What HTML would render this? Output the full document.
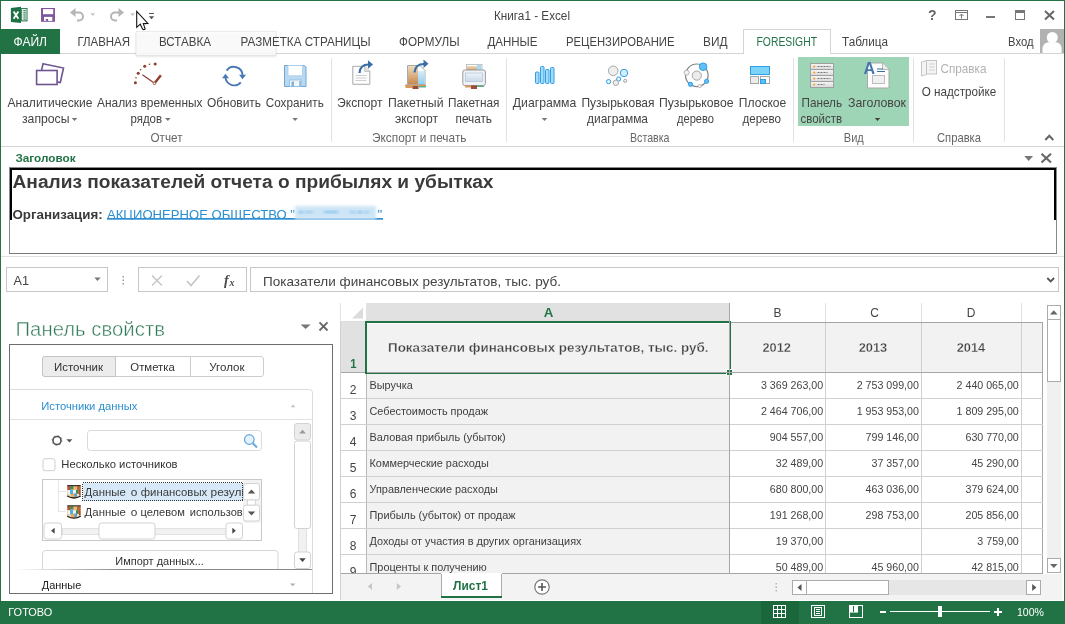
<!DOCTYPE html>
<html><head><meta charset="utf-8">
<style>
*{margin:0;padding:0}
html,body{width:1065px;height:624px;overflow:hidden;background:#fff}
svg{position:absolute;left:0;top:0;display:block;opacity:.999}
text{font-family:"Liberation Sans",sans-serif;font-size:12px;fill:#444;white-space:pre}
.t{font-size:12.5px}
#rlabels text{font-size:12.4px}
#trt text{font-size:11.6px;fill:#3a3a3a}
.g{fill:#666}
.b{font-weight:bold}
.c{shape-rendering:crispEdges}
.m{text-anchor:middle}
.e{text-anchor:end}
.n{font-size:10.67px;fill:#444}
.p{font-size:11px;fill:#333}
</style></head><body>
<svg width="1065" height="624" viewBox="0 0 1065 624">
<defs>
<linearGradient id="gOr" x1="0" y1="0" x2="0" y2="1"><stop offset="0" stop-color="#ecdcbc"/><stop offset="1" stop-color="#c98a52"/></linearGradient>
<linearGradient id="gBl" x1="0" y1="0" x2="0" y2="1"><stop offset="0" stop-color="#d6ecfa"/><stop offset="1" stop-color="#8fd0f2"/></linearGradient>
<linearGradient id="gGr" x1="0" y1="0" x2="0" y2="1"><stop offset="0" stop-color="#f6f6f6"/><stop offset="1" stop-color="#d9d9d9"/></linearGradient>
<linearGradient id="gPr" x1="0" y1="0" x2="0" y2="1"><stop offset="0" stop-color="#eef3f8"/><stop offset="1" stop-color="#c9d9ea"/></linearGradient>
<filter id="sh" x="-10%" y="-10%" width="120%" height="140%"><feGaussianBlur stdDeviation="1.2"/></filter>
<filter id="bl" x="-5%" y="-20%" width="110%" height="140%"><feGaussianBlur stdDeviation="1.5"/></filter>
</defs>
<rect width="1065" height="624" fill="#fff"/>

<!-- ===== TITLE BAR ===== -->
<g id="titlebar">
<text class="t" x="494" y="20" textLength="76" lengthAdjust="spacingAndGlyphs">Книга1 - Excel</text>
<!-- excel logo -->
<g id="xl">
<rect x="21" y="8.600" width="6" height="12.300" fill="#fff" stroke="#1e7145" stroke-width="1"/>
<g fill="#1e7145"><rect x="23.300" y="10.200" width="2.500" height="1.100"/><rect x="23.300" y="12.300" width="2.500" height="1.100"/><rect x="23.300" y="14.400" width="2.500" height="1.100"/><rect x="23.300" y="16.500" width="2.500" height="1.100"/><rect x="23.300" y="18.600" width="2.500" height="1.100"/>
<rect x="21" y="10.200" width="1.300" height="1.100"/><rect x="21" y="12.300" width="1.300" height="1.100"/><rect x="21" y="14.400" width="1.300" height="1.100"/><rect x="21" y="16.500" width="1.300" height="1.100"/><rect x="21" y="18.600" width="1.300" height="1.100"/></g>
<path d="M10.900 8 L21 6.800 L21 23.100 L10.900 22 Z" fill="#1e7145"/>
<path d="M13.600 11.400 L18.400 18.800 M18.400 11.400 L13.600 18.800" stroke="#fff" stroke-width="1.800" fill="none"/>
</g>
<!-- save (purple) -->
<g id="qsave">
<rect x="41" y="8" width="14" height="13.800" fill="#80579f"/>
<rect x="43" y="9.100" width="10.200" height="5.100" fill="#fff"/>
<rect x="44" y="16.900" width="8.300" height="4" fill="#fff"/>
<rect x="45.800" y="18.900" width="2.300" height="2" fill="#80579f"/>
</g>
<!-- undo -->
<g fill="none" stroke="#b5b5b5" stroke-width="2">
<path d="M73.5 12.5 H79 a4 4 0 0 1 0 8 H77"/>
<path d="M110 20.500 H112 a4 4 0 0 0 0 -8 H120" transform="translate(0,0)" visibility="hidden"/>
</g>
<path d="M70 12.500 L75.500 8 V17 Z" fill="#b5b5b5"/>
<path d="M90.400 13.300 h4.800 l-2.400 2.700 z" fill="#c4c4c4"/>
<!-- redo -->
<path d="M120.500 12.500 H115 a4 4 0 0 0 0 8 H117" fill="none" stroke="#b5b5b5" stroke-width="2"/>
<path d="M124 12.500 L118.500 8 V17 Z" fill="#b5b5b5"/>
<path d="M130.200 13.300 h4.800 l-2.400 2.700 z" fill="#c4c4c4"/>
<!-- customize -->
<rect class="c" x="149" y="13" width="5" height="1" fill="#555"/>
<path d="M148.800 16.300 h5.400 l-2.700 3 z" fill="#555"/>
<!-- window controls -->
<text x="928" y="20" class="b" style="font-size:14px;fill:#666">?</text>
<g class="c" fill="none" stroke="#777">
<rect x="955.500" y="10.500" width="12" height="9"/>
<path d="M955 12.500h13"/>
</g>
<path d="M961.500 18.500v-4M959.500 16l2-2 2 2" fill="none" stroke="#777" stroke-width="1"/>
<rect class="c" x="986" y="16" width="9" height="2" fill="#777"/>
<rect class="c" x="1015.500" y="11.500" width="9" height="8" fill="none" stroke="#777"/>
<rect class="c" x="1015" y="10" width="10" height="3" fill="#777"/>
<path d="M1045 11 L1054 19.500 M1054 11 L1045 19.500" stroke="#666" stroke-width="2" fill="none"/>
</g>

<!-- ===== TABS ===== -->
<g id="tabs">
<rect class="c" x="1" y="53" width="1063" height="1" fill="#d4d4d4"/>
<rect class="c" x="1" y="29" width="59" height="25" fill="#217346"/>
<text class="t" x="13.500" y="46" textLength="33.500" lengthAdjust="spacingAndGlyphs" style="fill:#fff">ФАЙЛ</text>
<text class="t" x="77.500" y="46" textLength="52.500" lengthAdjust="spacingAndGlyphs">ГЛАВНАЯ</text>
<!-- hover popup under cursor -->
<rect x="136" y="33" width="140" height="23.500" fill="#000" opacity=".13" filter="url(#sh)"/>
<rect x="136" y="31.300" width="140" height="24.200" fill="#fdfdfd" opacity=".88" stroke="#e2e2e2" stroke-width=".8"/>
<text class="t" x="159" y="46" textLength="52" lengthAdjust="spacingAndGlyphs">ВСТАВКА</text>
<text class="t" x="240.500" y="46" textLength="130" lengthAdjust="spacingAndGlyphs">РАЗМЕТКА СТРАНИЦЫ</text>
<text class="t" x="399" y="46" textLength="60.500" lengthAdjust="spacingAndGlyphs">ФОРМУЛЫ</text>
<text class="t" x="487.500" y="46" textLength="50" lengthAdjust="spacingAndGlyphs">ДАННЫЕ</text>
<text class="t" x="566" y="46" textLength="108.500" lengthAdjust="spacingAndGlyphs">РЕЦЕНЗИРОВАНИЕ</text>
<text class="t" x="703" y="46" textLength="24.500" lengthAdjust="spacingAndGlyphs">ВИД</text>
<rect class="c" x="743.500" y="29.500" width="87" height="24" fill="#fff" stroke="#d4d4d4"/>
<rect class="c" x="744" y="53" width="86" height="1" fill="#fff"/>
<text class="t" x="756.500" y="46" textLength="60.500" lengthAdjust="spacingAndGlyphs" style="fill:#217346">FORESIGHT</text>
<text class="t" x="842" y="46" textLength="46" lengthAdjust="spacingAndGlyphs">Таблица</text>
<text class="t" x="1008" y="46" textLength="25.500" lengthAdjust="spacingAndGlyphs">Вход</text>
<!-- avatar -->
<rect class="c" x="1040" y="29" width="24" height="24" fill="#b2b2b2"/>
<path d="M1042.500 53 v-4.500 q0 -4.500 5.500 -6.200 h8.600 q5 1.700 5 6.200 v4.500 z" fill="#fff"/>
<circle cx="1052.300" cy="37.500" r="5.500" fill="#fff"/>
<!-- cursor -->
<path d="M136.700 11.400 V27.300 L140.300 24.200 L142.500 28.900 Q143.800 30.400 145.100 28.900 L143.300 23.600 L147.900 23.400 Z" fill="#fff" stroke="#111" stroke-width="1.100" stroke-linejoin="miter"/>
</g>
<!-- ===== RIBBON ===== -->
<g id="ribbon">
<rect class="c" x="798" y="57" width="111" height="69" fill="#9fd5b7"/>
<g class="c" fill="#e2e2e2">
<rect x="331" y="58" width="1" height="84"/><rect x="506" y="58" width="1" height="84"/>
<rect x="793" y="58" width="1" height="84"/><rect x="913" y="58" width="1" height="84"/>
<rect x="1004" y="58" width="1" height="84"/>
</g>
<rect class="c" x="1" y="146" width="1063" height="1" fill="#d4d4d4"/>

<!-- icon: analytic queries -->
<g fill="#fff" stroke="#6f5590" stroke-width="1.600">
<path d="M43 63.800 L63.500 68 L60.300 82.500 L39.800 78.300 Z"/>
<rect x="36.600" y="70.500" width="20.500" height="14"/>
</g>
<!-- icon: time series -->
<g fill="#8f3c2c">
<circle cx="135.400" cy="82.800" r="1.500"/><circle cx="136" cy="77.800" r=".8"/><circle cx="138.200" cy="73.300" r="1.500"/>
<circle cx="140.600" cy="69.700" r=".8"/><circle cx="144.700" cy="66.300" r="1.500"/><circle cx="149.500" cy="64.300" r=".8"/>
<circle cx="155.200" cy="64" r="1.500"/>
</g>
<path d="M142.400 74.800 L154.500 83.200" stroke="#8f3c2c" stroke-width="1.200" fill="none"/>
<path d="M154.500 83.200 L160.900 75.300" stroke="#8f3c2c" stroke-width="2.400" fill="none"/>
<circle cx="154.500" cy="83.400" r="1.300" fill="#fff" stroke="#8f3c2c" stroke-width=".8"/>
<!-- icon: refresh -->
<g fill="none" stroke="#4a7ab5" stroke-width="1.900">
<path d="M226.600 70.600 A8.800 8.800 0 0 1 242.600 75.500"/>
<path d="M225.400 77 A8.800 8.800 0 0 0 240.800 82.300"/>
</g>
<path d="M222 78.300 L229 78.300 L225.500 73.800 Z" fill="#4a7ab5"/>
<path d="M239 74.800 L246 74.800 L242.500 79.300 Z" fill="#4a7ab5"/>
<!-- icon: save floppy -->
<g>
<path d="M284.500 65.500 h20 l1.500 1.500 v19.500 h-21.500 z" fill="#b9d9f1" stroke="#6ea6da" stroke-width="1"/>
<rect x="288" y="65.500" width="14.500" height="10.300" fill="#fff" stroke="#a9cdec" stroke-width=".8"/>
<rect x="289.600" y="80" width="11.600" height="6.500" fill="#f3f6f9" stroke="#8fbbe3" stroke-width=".8"/>
<rect x="291.500" y="81.500" width="2.500" height="5" fill="#7fb2e0"/>
<rect x="299.300" y="81" width="1.500" height="5.500" fill="#7fb2e0"/>
</g>
<!-- icon: export -->
<g>
<path d="M352.800 66.300 h12 l5 5 v13 h-17 z" fill="#fdfdfd" stroke="#a9a9a9" stroke-width="1"/>
<path d="M364.800 66.300 v5 h5" fill="#e8e8e8" stroke="#a9a9a9" stroke-width=".8"/>
<path d="M355.500 75.500h11M355.500 78h11M355.500 80.500h11" stroke="#cfcfcf" stroke-width="1"/>
<path d="M359.500 73 C360 67 364 64.500 368.500 64.500" fill="none" stroke="#3a6ea5" stroke-width="2.200"/>
<path d="M368 60.300 L373 64.500 L368 68.700 Z" fill="#3a6ea5"/>
</g>
<!-- icon: batch export -->
<g>
<rect x="405" y="84.500" width="21" height="1.500" fill="#d89a5a"/>
<rect x="405.500" y="86" width="7" height="2" fill="#d89a5a"/><rect x="412.500" y="86" width="6" height="3" fill="#9c4a3a"/><rect x="419" y="86" width="7" height="1.500" fill="#5fae8e"/>
<path d="M407.500 65.500 h12.500 l5 5 v14 h-17.500 z" fill="#fdfdfd" stroke="#a9a9a9" stroke-width="1"/>
<rect x="408" y="66" width="10" height="18" fill="url(#gOr)"/>
<rect x="418" y="71" width="6.500" height="13" fill="url(#gBl)"/>
<path d="M414.500 72.500 C415 66.500 419 64 424 64" fill="none" stroke="#3a6ea5" stroke-width="2.200"/>
<path d="M423.500 59.500 L428.500 63.800 L423.500 68.100 Z" fill="#3a6ea5"/>
</g>
<!-- icon: batch print -->
<g>
<rect x="466.500" y="64.500" width="15.500" height="9" fill="#fdfdfd" stroke="#b5b5b5" stroke-width=".8"/>
<rect x="467" y="66" width="10" height="6" fill="url(#gOr)"/><rect x="477" y="65" width="4.500" height="6" fill="#a9d9f3"/>
<rect x="462.800" y="70" width="22.600" height="15.500" rx="2" fill="#eef1f5" stroke="#9a9a9a" stroke-width="1"/>
<rect x="465.500" y="73" width="17" height="8.500" fill="url(#gPr)" stroke="#a8b8cc" stroke-width=".6"/>
<rect x="465" y="85.500" width="6" height="2" fill="#d89a5a"/><rect x="471" y="85.500" width="6" height="3.500" fill="#9c4a3a"/><rect x="477" y="85.500" width="7" height="1.500" fill="#5fae8e"/>
</g>
<!-- icon: chart -->
<g fill="#a4dbf8" stroke="#2e9fe6" stroke-width="1">
<rect x="535.500" y="72" width="3.500" height="11.500" rx="1"/><rect x="540.500" y="66.500" width="3.500" height="17" rx="1"/>
<rect x="545.500" y="69.500" width="3.500" height="14" rx="1"/><rect x="550.500" y="67.500" width="3.500" height="16" rx="1"/>
</g>
<!-- icon: bubble chart -->
<g stroke-width="1">
<circle cx="613.200" cy="70.800" r="4.800" fill="#eee" stroke="#a8a8a8"/>
<circle cx="624" cy="73" r="3.700" fill="#d5edfb" stroke="#2e9fe6"/>
<circle cx="608.600" cy="81.600" r="2.100" fill="#eaf6fd" stroke="#2e9fe6"/>
<circle cx="618.700" cy="79" r="2.100" fill="#eaf6fd" stroke="#2e9fe6"/>
<circle cx="615.900" cy="82.800" r="2.700" fill="#eee" stroke="#a8a8a8"/>
<circle cx="625.200" cy="80.800" r="1.600" fill="#eee" stroke="#a8a8a8"/>
</g>
<!-- icon: bubble tree -->
<g stroke-width="1">
<circle cx="696.800" cy="75.300" r="11.300" fill="none" stroke="#858585" stroke-width="1.200"/>
<circle cx="696.800" cy="75.600" r="4.600" fill="#ececec" stroke="#a5a5a5"/>
<circle cx="703.100" cy="66.700" r="3.800" fill="#62c0f4" stroke="#2e9fe6"/>
<circle cx="686.700" cy="72.700" r="2.500" fill="#f3f3f3" stroke="#b5b5b5"/>
<circle cx="706.600" cy="81.300" r="2.100" fill="#62c0f4" stroke="#2e9fe6"/>
<circle cx="690.500" cy="84.300" r="2.100" fill="#62c0f4" stroke="#2e9fe6"/>
<circle cx="699.800" cy="86.100" r="1.500" fill="#fff" stroke="#b5b5b5"/>
</g>
<!-- icon: flat tree -->
<g class="c" stroke-width="1">
<rect x="750.500" y="66.500" width="19" height="8" fill="#7dd3f7" stroke="#2e9fe6"/>
<rect x="750.500" y="76.500" width="8" height="7" fill="#ececec" stroke="#a5a5a5"/>
<rect x="760.500" y="76.500" width="9" height="7" fill="#fff" stroke="#a5a5a5"/>
<rect x="760.500" y="79.500" width="5" height="4" fill="#5cc0f3" stroke="#2e9fe6"/>
</g>
<!-- icon: properties panel -->
<g>
<g class="c" fill="url(#gGr)" stroke="#a0a0a0" stroke-width="1">
<rect x="810.500" y="63.500" width="23" height="6"/><rect x="810.500" y="69.500" width="23" height="6"/>
<rect x="810.500" y="75.500" width="23" height="6"/><rect x="810.500" y="81.500" width="23" height="6"/>
</g>
<g fill="#f0a030"><circle cx="814.200" cy="66.500" r="1.100"/><circle cx="814.200" cy="72.500" r="1.100"/><circle cx="814.200" cy="78.500" r="1.100"/><circle cx="814.200" cy="84.500" r="1.100"/></g>
<path d="M817.500 66.500h13M817.500 72.500h10M817.500 78.500h13M817.500 84.500h7" stroke="#777" stroke-width="1" stroke-dasharray="2 1"/>
</g>
<!-- icon: header -->
<g>
<path d="M867.500 63 h15 l6.500 6.500 v18.500 h-21.500 z" fill="#fdfdfd" stroke="#a9a9a9" stroke-width="1"/>
<path d="M882.500 63 v6.500 h6.500" fill="#eaeaea" stroke="#a9a9a9" stroke-width=".8"/>
<rect x="872.500" y="75.500" width="12" height="8" fill="#f0f0f0" stroke="#bdbdbd" stroke-width="1"/>
<path d="M877 69h6M877 71.500h8" stroke="#3a6ea5" stroke-width="1.200"/>
<text x="863.500" y="73.600" style="font-size:16px;font-weight:bold;fill:#4576ad">A</text>
</g>
<!-- icon: help book (disabled) -->
<g fill="#f4f4f4" stroke="#c4c4c4" stroke-width="1">
<path d="M921.500 62 l5 -1.500 v14 l-5 1.500 z"/>
<rect x="926.500" y="60.500" width="10" height="13.500"/>
<path d="M929 64h5.500M929 67h5.500M929 70h5.500" stroke="#d0d0d0"/>
</g>
<!-- ribbon labels -->
<g id="rlabels">
<text x="7.500" y="107" textLength="85" lengthAdjust="spacingAndGlyphs">Аналитические</text>
<text x="22" y="123" textLength="47.500" lengthAdjust="spacingAndGlyphs">запросы</text>
<path d="M71.700 118 h5.600 l-2.800 3 z" fill="#777"/>
<text x="97" y="107" textLength="105.500" lengthAdjust="spacingAndGlyphs">Анализ временных</text>
<text x="130.500" y="123" textLength="31.500" lengthAdjust="spacingAndGlyphs">рядов</text>
<path d="M165 118 h5.600 l-2.800 3 z" fill="#777"/>
<text x="207" y="107" textLength="54" lengthAdjust="spacingAndGlyphs">Обновить</text>
<text x="265.800" y="107" textLength="58" lengthAdjust="spacingAndGlyphs">Сохранить</text>
<path d="M292.300 118 h5.600 l-2.800 3 z" fill="#777"/>
<text x="337" y="107" textLength="45.500" lengthAdjust="spacingAndGlyphs">Экспорт</text>
<text x="388" y="107" textLength="55.500" lengthAdjust="spacingAndGlyphs">Пакетный</text>
<text x="395" y="123" textLength="43" lengthAdjust="spacingAndGlyphs">экспорт</text>
<text x="448" y="107" textLength="51.500" lengthAdjust="spacingAndGlyphs">Пакетная</text>
<text x="455.500" y="123" textLength="36.500" lengthAdjust="spacingAndGlyphs">печать</text>
<text x="512.800" y="107" textLength="63.500" lengthAdjust="spacingAndGlyphs">Диаграмма</text>
<path d="M541.700 118 h5.600 l-2.800 3 z" fill="#777"/>
<text x="581.500" y="107" textLength="73" lengthAdjust="spacingAndGlyphs">Пузырьковая</text>
<text x="587" y="123" textLength="61" lengthAdjust="spacingAndGlyphs">диаграмма</text>
<text x="659" y="107" textLength="74.500" lengthAdjust="spacingAndGlyphs">Пузырьковое</text>
<text x="677" y="123" textLength="37" lengthAdjust="spacingAndGlyphs">дерево</text>
<text x="738.800" y="107" textLength="47.500" lengthAdjust="spacingAndGlyphs">Плоское</text>
<text x="742.500" y="123" textLength="38.500" lengthAdjust="spacingAndGlyphs">дерево</text>
<text x="801.500" y="107" textLength="40.500" lengthAdjust="spacingAndGlyphs">Панель</text>
<text x="800.500" y="123" textLength="41.500" lengthAdjust="spacingAndGlyphs">свойств</text>
<text x="848" y="107" textLength="58" lengthAdjust="spacingAndGlyphs">Заголовок</text>
<path d="M874.700 118 h5.600 l-2.800 3 z" fill="#444"/>
<text x="940.500" y="73" textLength="46" lengthAdjust="spacingAndGlyphs" style="fill:#b2b2b2">Справка</text>
<text x="921.800" y="95.500" textLength="74.500" lengthAdjust="spacingAndGlyphs">О надстройке</text>
<text class="g" x="150.500" y="142" textLength="32" lengthAdjust="spacingAndGlyphs">Отчет</text>
<text class="g" x="372" y="142" textLength="94.500" lengthAdjust="spacingAndGlyphs">Экспорт и печать</text>
<text class="g" x="630" y="142" textLength="39.500" lengthAdjust="spacingAndGlyphs">Вставка</text>
<text class="g" x="843.800" y="142" textLength="20" lengthAdjust="spacingAndGlyphs">Вид</text>
<text class="g" x="937" y="142" textLength="44" lengthAdjust="spacingAndGlyphs">Справка</text>
<path d="M1045.300 140 l4 -4.200 l4 4.200" fill="none" stroke="#666" stroke-width="2"/>
</g>
</g>
<!-- ===== HEADER PANE ===== -->
<g id="hdr">
<text class="b" x="15.500" y="161.600" textLength="60" lengthAdjust="spacingAndGlyphs" style="font-size:11px;fill:#217346">Заголовок</text>
<path d="M1024.300 156 h8.800 l-4.400 5 z" fill="#777"/>
<path d="M1041.500 153.800 L1051 162.500 M1051 153.800 L1041.500 162.500" stroke="#666" stroke-width="2.100" fill="none"/>
<g class="c">
<rect x="9" y="167" width="1" height="87" fill="#8a8a8a"/>
<rect x="9" y="167" width="1048" height="1" fill="#8a8a8a"/>
<rect x="1056" y="167" width="1" height="87" fill="#8a8a8a"/>
<rect x="9" y="253" width="1048" height="1" fill="#7a7a7a"/>
<rect x="10" y="168" width="1046" height="2" fill="#000"/>
<rect x="10" y="168" width="2" height="52" fill="#000"/>
<rect x="1054" y="168" width="2" height="52" fill="#000"/>
<rect x="1" y="256" width="1063" height="1" fill="#e1e1e1"/>
</g>
<text class="b" x="12.500" y="188" textLength="481" lengthAdjust="spacingAndGlyphs" style="font-size:19.200px;fill:#3a3a3a">Анализ показателей отчета о прибылях и убытках</text>
<text class="b" x="12.500" y="218.600" style="font-size:13.330px;fill:#3a3a3a">Организация:</text>
<clipPath id="lk"><rect x="100" y="200" width="300" height="20"/></clipPath>
<g clip-path="url(#lk)">
<text x="107" y="218.800" textLength="188" lengthAdjust="spacingAndGlyphs" style="font-size:13.330px;fill:#2b8fd1">АКЦИОНЕРНОЕ ОБЩЕСТВО "</text>
<text x="377.500" y="218.800" style="font-size:13.330px;fill:#2b8fd1">"</text>
<rect x="107" y="218" width="276" height="1.700" fill="#2b8fd1"/>
<rect x="295" y="206" width="81" height="13.500" fill="#cde5f6" filter="url(#bl)"/>
<g fill="#7dbbe6" filter="url(#bl)"><rect x="299" y="211" width="4" height="2.500"/><rect x="305" y="211.500" width="8" height="1.500"/><rect x="324" y="211" width="14" height="2"/><rect x="350" y="211.500" width="6" height="1.500"/><rect x="358" y="211" width="4" height="2.500"/><rect x="364" y="211.500" width="5" height="1.500"/></g>
</g>
</g>

<!-- ===== FORMULA BAR ===== -->
<g id="fbar">
<g class="c" fill="#fff" stroke="#c6c6c6">
<rect x="6.500" y="267.500" width="101" height="24"/>
<rect x="138.500" y="267.500" width="108" height="24"/>
<rect x="250.500" y="267.500" width="808" height="24"/>
</g>
<text x="13.500" y="285" textLength="15.500" lengthAdjust="spacingAndGlyphs" style="font-size:13px">A1</text>
<path d="M94.300 277.500 h6.400 l-3.200 3.400 z" fill="#777"/>
<g fill="#9a9a9a"><rect x="122.500" y="276" width="1.500" height="1.500"/><rect x="122.500" y="279.500" width="1.500" height="1.500"/><rect x="122.500" y="283" width="1.500" height="1.500"/></g>
<path d="M152 275.500 l10 10 M162 275.500 l-10 10" stroke="#c3c3c3" stroke-width="1.300" fill="none"/>
<path d="M187 281 l4 4.500 l8.500 -10" stroke="#c3c3c3" stroke-width="1.500" fill="none"/>
<text x="224" y="285" style="font-family:'Liberation Serif',serif;font-style:italic;font-weight:bold;font-size:14px;fill:#4a4a4a">f</text>
<text x="229.500" y="286" style="font-family:'Liberation Serif',serif;font-style:italic;font-weight:bold;font-size:10px;fill:#4a4a4a">x</text>
<text x="263" y="285.500" textLength="298" lengthAdjust="spacingAndGlyphs" style="font-size:13px">Показатели финансовых результатов, тыс. руб.</text>
<path d="M1047.300 278 l3.400 3.400 l3.400 -3.400" stroke="#555" stroke-width="1.800" fill="none"/>
</g>

<!-- ===== LEFT PANEL ===== -->
<g id="lpanel">
<text x="15.500" y="336.300" textLength="149.500" lengthAdjust="spacingAndGlyphs" style="font-size:20px;fill:#2f7a56;stroke:#fff;stroke-width:.45px">Панель свойств</text>
<path d="M300.600 324.500 h10 l-5 4.500 z" fill="#777"/>
<path d="M319.500 322.300 L327.500 330.500 M327.500 322.300 L319.500 330.500" stroke="#666" stroke-width="1.800" fill="none"/>
<rect class="c" x="9.500" y="344.500" width="323" height="249" fill="#fff" stroke="#6e6e6e"/>
<!-- tab buttons -->
<rect x="42.500" y="356.500" width="221" height="20" rx="2.500" fill="#fff" stroke="#cdcdcd"/>
<path d="M45 356.500 h70.500 v20 h-70.500 a2.500 2.500 0 0 1 -2.500 -2.500 v-15 a2.500 2.500 0 0 1 2.500 -2.500 z" fill="#ececec" stroke="#c4c4c4"/>
<rect class="c" x="190" y="357" width="1" height="19" fill="#cdcdcd"/>
<text class="p" x="54" y="370.600" textLength="49" lengthAdjust="spacingAndGlyphs">Источник</text>
<text class="p" x="130.300" y="370.600" textLength="44.500" lengthAdjust="spacingAndGlyphs">Отметка</text>
<text class="p" x="209.300" y="370.600" textLength="35.300" lengthAdjust="spacingAndGlyphs">Уголок</text>
<!-- section -->
<path d="M10 389.500 H309.500 a3 3 0 0 1 3 3 V593" fill="none" stroke="#dcdcdc"/>
<rect class="c" x="10" y="419" width="302" height="1" fill="#e2e2e2"/>
<text x="41.300" y="409.500" textLength="96" lengthAdjust="spacingAndGlyphs" style="font-size:11px;fill:#2b8fd1">Источники данных</text>
<path d="M290.800 407.200 h4.400 l-2.200 -2.800 z" fill="#c0c0c0"/>
<!-- gear -->
<circle cx="57" cy="440.500" r="4" fill="none" stroke="#505050" stroke-width="1.600"/>
<circle cx="57" cy="440.500" r="5" fill="none" stroke="#4a4a4a" stroke-width="1" stroke-dasharray="1.300 2.630" opacity=".55"/>
<path d="M66.400 439.200 h6 l-3 3.200 z" fill="#555"/>
<!-- search box -->
<rect x="87.500" y="430.500" width="174" height="20" rx="3" fill="#fff" stroke="#d9d9d9"/>
<circle cx="249.300" cy="439.500" r="4.800" fill="#e6f2fb" stroke="#62a8de" stroke-width="1.200"/>
<path d="M252.800 443.300 L257 447.500" stroke="#6fa9d8" stroke-width="2" fill="none"/>
<!-- checkbox -->
<rect x="43" y="458.700" width="12" height="12" rx="2" fill="#fff" stroke="#cfcfcf"/>
<text class="p" x="61.300" y="468.300" textLength="116.300" lengthAdjust="spacingAndGlyphs">Несколько источников</text>
<!-- tree box -->
<rect class="c" x="42.500" y="479.500" width="219" height="61" fill="#fff" stroke="#c9c9c9"/>
<g class="c" fill="#e6e6e6"><rect x="58" y="480" width="1" height="32"/><rect x="59" y="491" width="7" height="1"/><rect x="59" y="511" width="7" height="1"/></g>
<rect class="c" x="82.500" y="482.500" width="160" height="18" fill="#d7e9f8" stroke="#333" stroke-dasharray="1 1"/>
<clipPath id="tr"><rect x="60" y="480" width="183" height="43"/></clipPath>
<g clip-path="url(#tr)" id="trt">
<text x="84.6" y="496.3" textLength="41.2" lengthAdjust="spacingAndGlyphs">Данные</text>
<text x="130.8" y="496.3" textLength="6.6" lengthAdjust="spacingAndGlyphs">о</text>
<text x="140.8" y="496.3" textLength="66.4" lengthAdjust="spacingAndGlyphs">финансовых</text>
<text x="210.6" y="496.3" textLength="41.5" lengthAdjust="spacingAndGlyphs">результ</text>
<text x="84.6" y="516.4" textLength="41.2" lengthAdjust="spacingAndGlyphs">Данные</text>
<text x="130.8" y="516.4" textLength="6.6" lengthAdjust="spacingAndGlyphs">о</text>
<text x="140.4" y="516.4" textLength="44.4" lengthAdjust="spacingAndGlyphs">целевом</text>
<text x="189.8" y="516.4" textLength="59" lengthAdjust="spacingAndGlyphs">использова</text>
</g>
<!-- tree icons -->
<g id="ti1">
<path d="M67.300 485.800 h13.400 v10.500 q-6.700 3.600 -13.400 0 z" fill="#dba468"/>
<rect x="67.500" y="486" width="3" height="4" fill="#a8552f"/><rect x="70.500" y="486" width="3" height="3" fill="#3e8a63"/><rect x="73.500" y="486.500" width="3.500" height="3.500" fill="#e9b97a"/><rect x="77" y="486" width="3.500" height="4" fill="#b7673b"/>
<rect x="67.500" y="490" width="2.500" height="4" fill="#f6f1ea"/><rect x="70" y="489.500" width="3" height="4.500" fill="#46b4ea"/><rect x="73" y="490" width="3" height="3.500" fill="#f6f1ea"/><rect x="76" y="490" width="2.500" height="3.500" fill="#3e8a63"/><rect x="78.500" y="490" width="2" height="5" fill="#a8552f"/>
<rect x="68" y="494" width="3" height="3" fill="#e4d6c4"/><rect x="71" y="494" width="3.500" height="3.500" fill="#e9a85c"/><rect x="74.500" y="493.500" width="2.500" height="3.500" fill="#46a4dc"/><rect x="77" y="494" width="2" height="2.500" fill="#f0e6d8"/>
<path d="M67.200 485.600 h13.600" stroke="#3a2a22" stroke-width="1.100" fill="none"/>
<path d="M67.300 496 q6.700 4 13.400 0" stroke="#2a1d18" stroke-width="1.300" fill="none"/>
</g>
<g id="ti2" transform="translate(0,20.200)">
<path d="M67.300 485.800 h13.400 v10.500 q-6.700 3.600 -13.400 0 z" fill="#dba468"/>
<rect x="67.500" y="486" width="3" height="4" fill="#a8552f"/><rect x="70.500" y="486" width="3" height="3" fill="#3e8a63"/><rect x="73.500" y="486.500" width="3.500" height="3.500" fill="#e9b97a"/><rect x="77" y="486" width="3.500" height="4" fill="#b7673b"/>
<rect x="67.500" y="490" width="2.500" height="4" fill="#f6f1ea"/><rect x="70" y="489.500" width="3" height="4.500" fill="#46b4ea"/><rect x="73" y="490" width="3" height="3.500" fill="#f6f1ea"/><rect x="76" y="490" width="2.500" height="3.500" fill="#3e8a63"/><rect x="78.500" y="490" width="2" height="5" fill="#a8552f"/>
<rect x="68" y="494" width="3" height="3" fill="#e4d6c4"/><rect x="71" y="494" width="3.500" height="3.500" fill="#e9a85c"/><rect x="74.500" y="493.500" width="2.500" height="3.500" fill="#46a4dc"/><rect x="77" y="494" width="2" height="2.500" fill="#f0e6d8"/>
<path d="M67.200 485.600 h13.600" stroke="#3a2a22" stroke-width="1.100" fill="none"/>
<path d="M67.300 496 q6.700 4 13.400 0" stroke="#2a1d18" stroke-width="1.300" fill="none"/>
</g>
<!-- inner v scroll -->
<rect class="c" x="243" y="480" width="18" height="43" fill="#f3f3f3"/>
<rect x="243.500" y="483.500" width="16" height="16.500" rx="2.500" fill="#fff" stroke="#d2d2d2"/>
<rect x="243.500" y="505" width="16" height="16" rx="2.500" fill="#fff" stroke="#d2d2d2"/>
<rect x="247.500" y="500" width="8" height="5" fill="#fff" stroke="#d8d8d8"/>
<path d="M247.800 493.500 h7.400 l-3.700 -4 z" fill="#555"/><path d="M247.800 511.500 h7.400 l-3.700 4 z" fill="#555"/>
<!-- inner h scroll -->
<rect class="c" x="62" y="528" width="164" height="6" fill="#f1f1f1" stroke="#e2e2e2"/>
<rect x="44" y="523" width="17.500" height="16" rx="2.500" fill="#fff" stroke="#d2d2d2"/>
<rect x="226" y="523" width="16.500" height="16" rx="2.500" fill="#fff" stroke="#d2d2d2"/>
<rect x="99" y="523" width="56" height="16" rx="2.500" fill="#fff" stroke="#d2d2d2"/>
<path d="M54.600 527.800 v6 l-3.500 -3 z" fill="#444"/><path d="M232.300 527.800 v6 l3.500 -3 z" fill="#444"/>
<!-- import button -->
<clipPath id="ib"><rect x="40" y="548" width="242" height="21"/></clipPath>
<g clip-path="url(#ib)"><rect x="42.500" y="550.500" width="235.500" height="24" rx="3" fill="#fff" stroke="#d6d6d6"/></g>
<text class="p" x="115.300" y="564.800" textLength="88.500" lengthAdjust="spacingAndGlyphs">Импорт данных...</text>
<!-- outer v scroll -->
<rect class="c" x="298" y="528" width="8" height="24" fill="#f1f1f1" stroke="#e0e0e0"/>
<rect x="294.500" y="423.500" width="16" height="16.500" rx="2.500" fill="#ececec" stroke="#d2d2d2"/>
<rect x="294.500" y="441" width="16" height="87.500" rx="2.500" fill="#fff" stroke="#d2d2d2"/>
<rect x="294.500" y="552" width="16" height="16.500" rx="2.500" fill="#fff" stroke="#d2d2d2"/>
<path d="M299.200 433.500 h6.600 l-3.300 -3.800 z" fill="#9a9a9a"/><path d="M299.200 558.300 h6.600 l-3.300 3.800 z" fill="#444"/>
<!-- data section -->
<linearGradient id="gLn" x1="16" y1="0" x2="312" y2="0" gradientUnits="userSpaceOnUse"><stop offset="0" stop-color="#8a8a8a" stop-opacity="0"/><stop offset=".35" stop-color="#8a8a8a"/><stop offset="1" stop-color="#8a8a8a"/></linearGradient>
<rect class="c" x="16" y="569" width="296" height="1" fill="url(#gLn)"/>
<text x="41.800" y="589" textLength="39.500" lengthAdjust="spacingAndGlyphs" style="font-size:11px;fill:#222">Данные</text>
<path d="M290 583.500 h5.400 l-2.700 2.800 z" fill="#b0b0b0"/>
</g>
<!-- ===== GRID ===== -->
<g id="grid">
<clipPath id="gc"><rect x="340" y="300" width="704" height="274"/></clipPath>
<g clip-path="url(#gc)">
<g class="c">
<rect x="341" y="303" width="702" height="19" fill="#fff"/>
<rect x="367" y="303" width="362" height="19" fill="#e1e1e1"/>
<rect x="341" y="322" width="26" height="51" fill="#e1e1e1"/>
<rect x="367" y="322" width="676" height="51" fill="#f2f2f2"/>
<rect x="367" y="373" width="362" height="201" fill="#f2f2f2"/>
</g>
<path d="M363 307.500 v11 h-11 z" fill="#dcdcdc"/>
<g class="c" fill="#d0d0d0">
<rect x="340" y="322" width="1" height="252"/>
<rect x="340" y="303" width="1" height="19" fill="#e2e2e2"/>
<rect x="366" y="322" width="1" height="252" fill="#b8b8b8"/>
<rect x="366" y="303" width="1" height="19" fill="#e2e2e2"/>
<rect x="729" y="322" width="1" height="252"/>
<rect x="729" y="303" width="1" height="19" fill="#e2e2e2"/>
<rect x="825" y="322" width="1" height="252"/>
<rect x="825" y="303" width="1" height="19" fill="#e2e2e2"/>
<rect x="921" y="322" width="1" height="252"/>
<rect x="921" y="303" width="1" height="19" fill="#e2e2e2"/>
<rect x="1021" y="322" width="1" height="252"/>
<rect x="1021" y="303" width="1" height="19" fill="#e2e2e2"/>
<rect x="1042" y="322" width="1" height="252" fill="#a6a6a6"/>
<rect x="341" y="398" width="702" height="1"/>
<rect x="341" y="424" width="702" height="1"/>
<rect x="341" y="450" width="702" height="1"/>
<rect x="341" y="476" width="702" height="1"/>
<rect x="341" y="502" width="702" height="1"/>
<rect x="341" y="528" width="702" height="1"/>
<rect x="341" y="554" width="702" height="1"/>
<rect x="341" y="580" width="702" height="1"/>
<rect x="341" y="606" width="702" height="1"/>
<rect x="341" y="372" width="702" height="1" fill="#a6a6a6"/>
<rect x="731" y="322" width="312" height="1" fill="#a6a6a6"/>
<rect x="341" y="321" width="24" height="1" fill="#dcdcdc"/>
</g>
<g class="c">
<rect x="366" y="323" width="363" height="49" fill="none" stroke="#fff" stroke-width="1" transform="translate(.5,.5)"/>
<g fill="#217346">
<rect x="365" y="321" width="366" height="2"/>
<rect x="365" y="321" width="2" height="53"/>
<rect x="729" y="321" width="2" height="49"/>
<rect x="365" y="372" width="361" height="2"/>
</g>
<rect x="726" y="369" width="7" height="7" fill="#fff"/>
<rect x="727" y="370" width="5" height="5" fill="#217346"/>
<rect x="729" y="303" width="1" height="271" fill="#a6a6a6"/>
<rect x="367" y="372" width="676" height="1" fill="#a6a6a6"/>
</g>
<text class="b m" x="548.500" y="316.800" style="fill:#217346;font-size:13.300px">A</text>
<text class="m" x="777.600" y="316.800">B</text>
<text class="m" x="874.600" y="316.800">C</text>
<text class="m" x="971.200" y="316.800">D</text>
<text class="b m" x="353.500" y="368" textLength="6.300" lengthAdjust="spacingAndGlyphs" style="fill:#217346;font-size:13.300px">1</text>
<text class="m" x="353" y="393.8">2</text>
<text class="m" x="353" y="419.8">3</text>
<text class="m" x="353" y="445.8">4</text>
<text class="m" x="353" y="471.8">5</text>
<text class="m" x="353" y="497.8">6</text>
<text class="m" x="353" y="523.8">7</text>
<text class="m" x="353" y="549.8">8</text>
<text class="m" x="353" y="575.8">9</text>
<text class="b" x="388" y="352" textLength="320.500" lengthAdjust="spacingAndGlyphs" style="font-size:13.330px;fill:#404040;stroke:#f2f2f2;stroke-width:.3px">Показатели финансовых результатов, тыс. руб.</text>
<text class="b m" x="776.7" y="352" textLength="28.500" lengthAdjust="spacingAndGlyphs" style="font-size:13.330px;fill:#404040;stroke:#f2f2f2;stroke-width:.3px">2012</text>
<text class="b m" x="873" y="352" textLength="28.500" lengthAdjust="spacingAndGlyphs" style="font-size:13.330px;fill:#404040;stroke:#f2f2f2;stroke-width:.3px">2013</text>
<text class="b m" x="971" y="352" textLength="28.500" lengthAdjust="spacingAndGlyphs" style="font-size:13.330px;fill:#404040;stroke:#f2f2f2;stroke-width:.3px">2014</text>
<text class="n" x="369.500" y="389" style="font-size:10.900px;fill:#3e3e3e">Выручка</text>
<text class="n e" x="823.2" y="389">3 369 263,00</text>
<text class="n e" x="918.9" y="389">2 753 099,00</text>
<text class="n e" x="1018.8" y="389">2 440 065,00</text>
<text class="n" x="369.500" y="415" style="font-size:10.900px;fill:#3e3e3e">Себестоимость продаж</text>
<text class="n e" x="823.2" y="415">2 464 706,00</text>
<text class="n e" x="918.9" y="415">1 953 953,00</text>
<text class="n e" x="1018.8" y="415">1 809 295,00</text>
<text class="n" x="369.500" y="441" style="font-size:10.900px;fill:#3e3e3e">Валовая прибыль (убыток)</text>
<text class="n e" x="823.2" y="441">904 557,00</text>
<text class="n e" x="918.9" y="441">799 146,00</text>
<text class="n e" x="1018.8" y="441">630 770,00</text>
<text class="n" x="369.500" y="467" style="font-size:10.900px;fill:#3e3e3e">Коммерческие расходы</text>
<text class="n e" x="823.2" y="467">32 489,00</text>
<text class="n e" x="918.9" y="467">37 357,00</text>
<text class="n e" x="1018.8" y="467">45 290,00</text>
<text class="n" x="369.500" y="493" style="font-size:10.900px;fill:#3e3e3e">Управленческие расходы</text>
<text class="n e" x="823.2" y="493">680 800,00</text>
<text class="n e" x="918.9" y="493">463 036,00</text>
<text class="n e" x="1018.8" y="493">379 624,00</text>
<text class="n" x="369.500" y="519" style="font-size:10.900px;fill:#3e3e3e">Прибыль (убыток) от продаж</text>
<text class="n e" x="823.2" y="519">191 268,00</text>
<text class="n e" x="918.9" y="519">298 753,00</text>
<text class="n e" x="1018.8" y="519">205 856,00</text>
<text class="n" x="369.500" y="545" style="font-size:10.900px;fill:#3e3e3e">Доходы от участия в других организациях</text>
<text class="n e" x="823.2" y="545">19 370,00</text>
<text class="n e" x="1018.8" y="545">3 759,00</text>
<text class="n" x="369.500" y="571" style="font-size:10.900px;fill:#3e3e3e">Проценты к получению</text>
<text class="n e" x="823.2" y="571">50 489,00</text>
<text class="n e" x="918.9" y="571">45 960,00</text>
<text class="n e" x="1018.8" y="571">42 815,00</text>
</g>
<rect class="c" x="341" y="573" width="100" height="1" fill="#a6a6a6"/><rect class="c" x="502" y="573" width="541" height="1" fill="#a6a6a6"/>
<g class="c">
<rect x="1047" y="305" width="14" height="268" fill="#f0f0f0"/>
<rect x="1047.500" y="305.500" width="13" height="14" fill="#fff" stroke="#ababab"/>
<rect x="1047.500" y="319.500" width="13" height="62" fill="#fff" stroke="#ababab"/>
<rect x="1047.500" y="558.500" width="13" height="14" fill="#fff" stroke="#ababab"/>
</g>
<path d="M1050 314.400 h7.600 l-3.800 -4.200 z" fill="#666"/><path d="M1050 564 h7.600 l-3.800 4 z" fill="#666"/>
</g>
<!-- ===== SHEET TABS ===== -->
<g id="sheets">
<rect class="c" x="341" y="574" width="721" height="26" fill="#f3f3f3"/>
<rect class="c" x="340" y="574" width="1" height="26" fill="#d0d0d0"/>
<path d="M372 583 v7 l-4.200 -3.500 z" fill="#c6c6c6"/><path d="M396.800 583 v7 l4.200 -3.500 z" fill="#c6c6c6"/>
<rect class="c" x="441" y="573" width="61" height="23" fill="#fff"/>
<rect class="c" x="441" y="574" width="1" height="22" fill="#ababab"/><rect class="c" x="501" y="574" width="1" height="22" fill="#ababab"/>
<rect class="c" x="441" y="596" width="61" height="2" fill="#217346"/>
<text class="b" x="453" y="590.200" textLength="35" lengthAdjust="spacingAndGlyphs" style="font-size:12.700px;fill:#217346">Лист1</text>
<circle cx="542" cy="587" r="7.200" fill="#fff" stroke="#777" stroke-width="1.200"/>
<path d="M538 587 h8 M542 583 v8" stroke="#555" stroke-width="1.600"/>
<g fill="#b5b5b5"><rect x="775.500" y="583" width="1.500" height="1.500"/><rect x="775.500" y="586.500" width="1.500" height="1.500"/><rect x="775.500" y="590" width="1.500" height="1.500"/></g>
<g class="c">
<rect x="807" y="580" width="219" height="15" fill="#e6e6e6"/>
<rect x="792.500" y="580.500" width="14" height="14" fill="#fff" stroke="#ababab"/>
<rect x="806.500" y="580.500" width="82" height="14" fill="#fff" stroke="#ababab"/>
<rect x="1026.500" y="580.500" width="14" height="14" fill="#fff" stroke="#ababab"/>
</g>
<path d="M801.500 584 v7 l-4 -3.500 z" fill="#555"/><path d="M1032.200 584 v7 l4.200 -3.500 z" fill="#555"/>
</g>
<!-- ===== STATUS ===== -->
<g id="status">
<rect class="c" x="0" y="600" width="1065" height="1" fill="#fff"/>
<rect class="c" x="0" y="601" width="1065" height="23" fill="#217346"/>
<text x="8.300" y="616" textLength="44" lengthAdjust="spacingAndGlyphs" style="font-size:11.500px;fill:#fff">ГОТОВО</text>
<rect class="c" x="761" y="601" width="38" height="23" fill="#1a673b"/>
<g class="c" fill="none" stroke="#fff" stroke-width="1">
<rect x="773.500" y="605.500" width="12" height="12"/><path d="M777.500 605v13M781.500 605v13M773 609.500h13M773 613.500h13"/>
<rect x="811.500" y="605.500" width="13" height="12"/><rect x="814.500" y="607.500" width="7" height="8"/><path d="M816 609.500h4M816 611.500h4M816 613.500h4"/>
<rect x="849.500" y="605.500" width="13" height="12"/>
</g>
<g class="c" fill="#fff"><rect x="850" y="606" width="3" height="6"/><rect x="854" y="606" width="4" height="6"/><rect x="850" y="612" width="8" height="1" opacity=".6"/>
<rect x="880" y="611" width="6" height="2"/><rect x="890" y="611" width="100" height="1"/><rect x="938" y="606" width="4" height="11"/>
<rect x="994" y="611" width="8" height="2"/><rect x="997" y="608" width="2" height="8"/></g>
<text x="1017" y="615.500" textLength="27" lengthAdjust="spacingAndGlyphs" style="font-size:11.500px;fill:#fff">100%</text>
</g>
<g class="c" fill="#217346"><rect x="0" y="0" width="1065" height="1"/><rect x="0" y="0" width="1" height="624"/><rect x="1064" y="0" width="1" height="624"/></g>
</svg>
</body></html>
